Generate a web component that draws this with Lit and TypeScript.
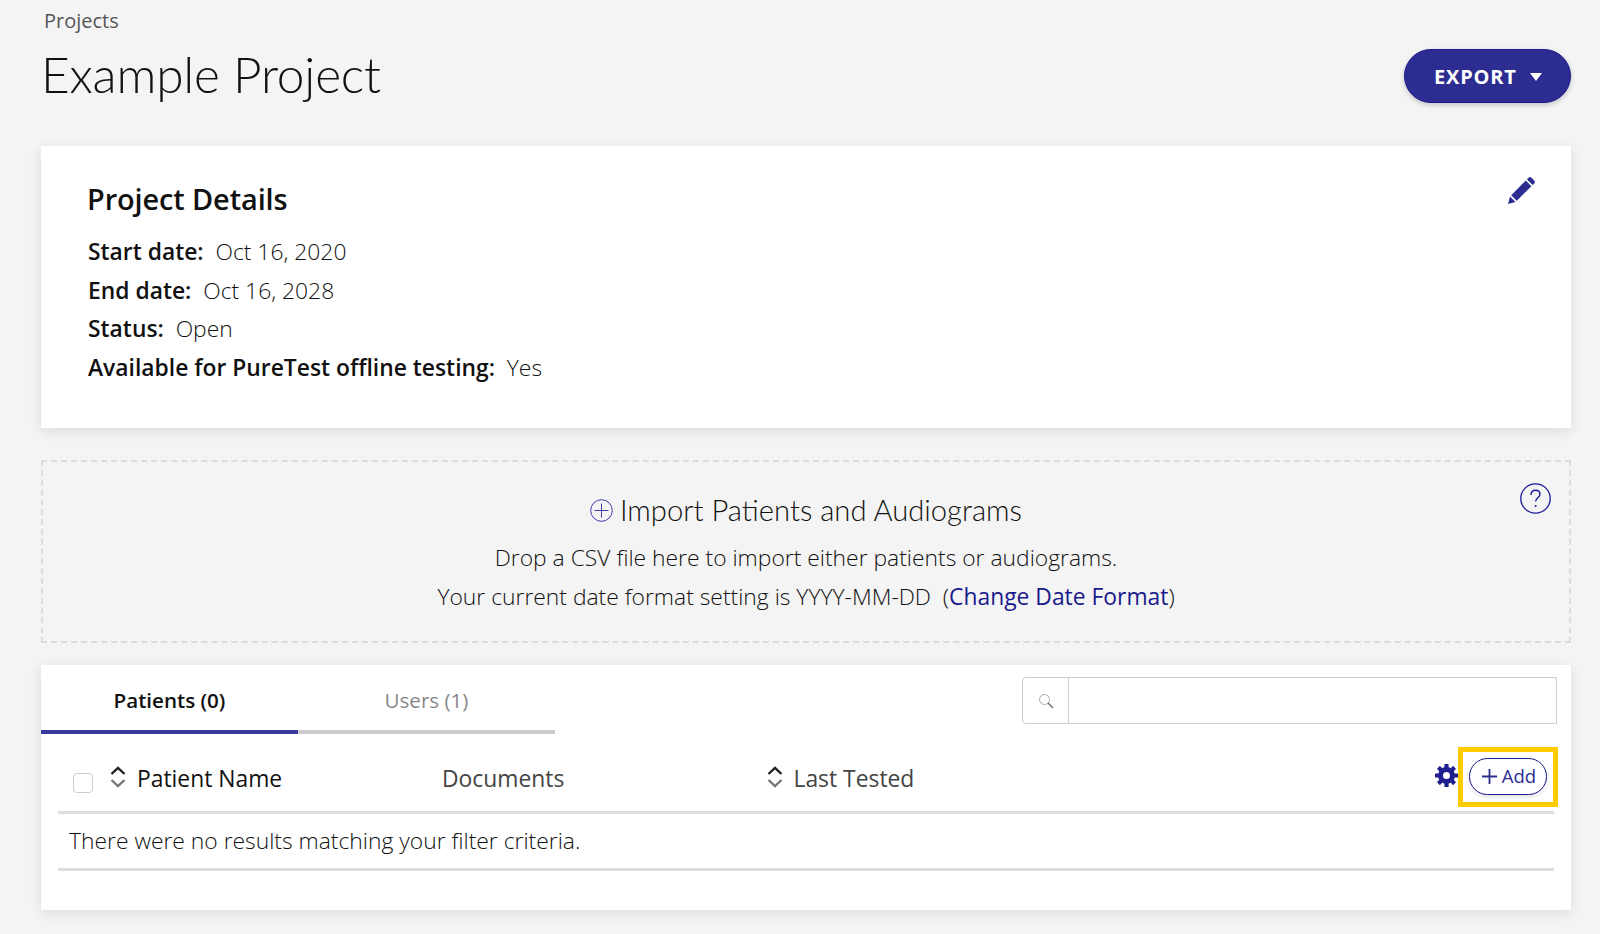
import { LitElement, html, css, svg } from "lit";
import { customElement } from "lit/decorators.js";

const sortIcon = html`<svg class="sort" viewBox="0 0 16 22" width="16" height="22" fill="none" stroke-width="2.4">
  <path d="M1.5 8 8 1.8 14.5 8" stroke="#222"/>
  <path d="M1.5 14 8 20.2 14.5 14" stroke="#777"/>
</svg>`;

const teeth = [0, 45, 90, 135, 180, 225, 270, 315].map(
  (a) => svg`<rect x="9.4" y="0" width="4.2" height="5" rx=".6" transform="rotate(${a} 11.5 11.5)"/>`
);

@customElement("app-root")
export class AppRoot extends LitElement {
  static styles = css`
    :host {
      display: block;
      width: 1600px;
      height: 934px;
      overflow: hidden;
      background: #f4f4f4;
      font-family: "Open Sans", sans-serif;
      color: #111;
    }
    .page { padding: 0 29px 0 41px; }
    .head { display: flex; justify-content: space-between; align-items: flex-start; height: 146px; }
    .crumb { font-size: 20px; line-height: 27px; padding: 7px 0 0 3px; color: #555; }
    h1 {
      margin: 10px 0 0;
      font: 300 49.6px/60px Lato, sans-serif;
      color: #111;
      letter-spacing: -0.2px;
    }
    .export {
      margin-top: 49px;
      width: 167px;
      height: 54px;
      box-sizing: border-box;
      border: 1px solid #1a1a8c;
      border-radius: 27px;
      background: #2c2c91;
      color: #fff;
      font: 700 20px/1 "Open Sans", sans-serif;
      letter-spacing: 0.8px;
      display: flex;
      align-items: center;
      padding: 2px 0 0 29px;
      gap: 13px;
      box-shadow: 0 2px 5px rgba(0,0,0,.2);
    }
    .caret { width: 0; height: 0; border: 6.5px solid transparent; border-top: 8px solid #fff; border-bottom: 0; }
    .card { background: #fff; box-shadow: 0 3px 12px rgba(0,0,0,.1); }
    .details { position: relative; height: 282px; box-sizing: border-box; padding: 34px 47px 0; }
    .edit { position: absolute; top: 31px; right: 36px; }
    h2 { margin: 0 0 15px; font: 600 28.9px/38px "Open Sans", sans-serif; letter-spacing: -0.1px; margin-left: -1px; }
    .row { font-size: 22.85px; line-height: 38.7px; font-weight: 300; white-space: pre; }
    .row b { font-weight: 600; }
    .drop {
      position: relative;
      margin-top: 32px;
      height: 183px;
      box-sizing: border-box;
      border: 2px dashed #dcdcdc;
      text-align: center;
      padding-top: 29px;
      font-size: 22.85px;
      font-weight: 300;
      line-height: 39px;
    }
    .help { position: absolute; top: 21px; right: 18px; }
    .drop h3 {
      margin: 0 0 8.5px;
      font: 300 29.2px/38px Lato, sans-serif;
      display: flex;
      justify-content: center;
      align-items: center;
      gap: 7px;
    }
    .drop .fmt { white-space: pre; }
    .drop a { color: #1a1a8c; font-weight: 400; text-decoration: none; }
    .table { margin-top: 22px; height: 245px; }
    .top { display: flex; justify-content: space-between; height: 69px; }
    .tabs { display: flex; }
    .tab {
      width: 257px;
      height: 69px;
      box-sizing: border-box;
      border-bottom: 4px solid #ccc;
      font-size: 20.6px;
      line-height: 27px;
      padding-top: 22px;
      text-align: center;
      color: #888;
    }
    .tab.on { border-bottom-color: #3a3a9e; color: #111; font-weight: 600; }
    .search {
      display: flex;
      width: 535px;
      height: 47px;
      box-sizing: border-box;
      margin: 12px 14px 0 0;
      border: 1.5px solid #ccc;
      border-radius: 4px 0 0 4px;
    }
    .mag { width: 45px; border-right: 1.5px solid #ccc; display: flex; align-items: center; justify-content: center; }
    .body { margin: 0 17px; }
    .cols {
      display: flex;
      align-items: center;
      height: 80px;
      box-sizing: border-box;
      border-bottom: 3px solid #ddd;
      font-size: 22.85px;
      padding: 12px 0 0 15px;
    }
    .check { width: 20px; height: 20px; box-sizing: border-box; border: 1.5px solid #ccc; border-radius: 4px; margin: 9px 17px 0 0; }
    .sort { flex: none; margin: -3px 11px 0 0; }
    .name { width: 305px; }
    .docs { width: 324.5px; color: #444; }
    .last { color: #444; flex: 1; }
    .gear { margin-right: 0; flex: none; margin-top: -7px; }
    .focus {
      box-sizing: border-box;
      width: 100px;
      height: 60px;
      border: 5px solid #ffcc00;
      display: flex;
      align-items: center;
      justify-content: center;
      margin: -4px -4px 0 0;
    }
    .add {
      width: 78px;
      height: 37px;
      box-sizing: border-box;
      border: 1.5px solid #1a1a8c;
      border-radius: 19px;
      background: #fff;
      color: #2c2c91;
      font: 400 18.5px/1 "Open Sans", sans-serif;
      display: flex;
      align-items: center;
      justify-content: center;
      gap: 5px;
      box-shadow: 0 2px 4px rgba(0,0,0,.12);
    }
    .add svg { margin-left: 2px; }
    .empty {
      height: 57px;
      box-sizing: border-box;
      border-bottom: 3px solid #ddd;
      font-size: 22.85px;
      font-weight: 300;
      line-height: 54px;
      padding-left: 11px;
    }
  `;

  render() {
    return html`<div class="page">
      <div class="head">
        <div>
          <div class="crumb">Projects</div>
          <h1>Example Project</h1>
        </div>
        <div class="export">EXPORT <span class="caret"></span></div>
      </div>

      <section class="card details">
        <svg class="edit" width="27" height="27" viewBox="0 0 27 27" fill="#2c2c91">
          <path d="M0 27 2 19.5 7.5 25z"/>
          <path d="M3.2 18.2 17.8 3.6 23.4 9.2 8.8 23.8z"/>
          <path d="M19 2.4 20.6.8a2 2 0 0 1 2.8 0l2.8 2.8a2 2 0 0 1 0 2.8L24.600 8z"/>
        </svg>
        <h2>Project Details</h2>
        <div class="row"><b>Start date:</b>  Oct 16, 2020</div>
        <div class="row"><b>End date:</b>  Oct 16, 2028</div>
        <div class="row"><b>Status:</b>  Open</div>
        <div class="row"><b>Available for PureTest offline testing:</b>  Yes</div>
      </section>

      <section class="drop">
        <svg class="help" width="31" height="31" viewBox="0 0 31 31" fill="none" stroke="#1a1a99">
          <circle cx="15.500" cy="15.500" r="14.700" stroke-width="1.300"/>
          <path d="M11 12c0-3 2-4.800 4.600-4.800s4.400 1.700 4.400 4.100c0 3.300-4.400 3.700-4.400 7.200" stroke-width="1.400"/>
          <circle cx="15.600" cy="23" r="1" fill="#1a1a99" stroke="none"/>
        </svg>
        <h3>
          <svg width="23" height="23" viewBox="0 0 23 23" fill="none" stroke="#3a3aa8" stroke-width="1">
            <circle cx="11.500" cy="11.500" r="10.800"/>
            <path d="M11.500 4.500v14M4.500 11.500h14"/>
          </svg>
          Import Patients and Audiograms
        </h3>
        <div>Drop a CSV file here to import either patients or audiograms.</div>
        <div class="fmt">Your current date format setting is YYYY-MM-DD  (<a href="#">Change Date Format</a>)</div>
      </section>

      <section class="card table">
        <div class="top">
          <div class="tabs">
            <div class="tab on">Patients (0)</div>
            <div class="tab">Users (1)</div>
          </div>
          <div class="search">
            <div class="mag">
              <svg width="16" height="16" viewBox="0 0 16 16" fill="none">
                <circle cx="6.500" cy="6.500" r="5" stroke="#aaa"/>
                <path d="M10 10l5 5" stroke="#666" stroke-width="1.200"/>
              </svg>
            </div>
          </div>
        </div>
        <div class="body">
          <div class="cols">
            <span class="check"></span>
            ${sortIcon}
            <span class="name">Patient Name</span>
            <span class="docs">Documents</span>
            ${sortIcon}
            <span class="last">Last Tested</span>
            <svg class="gear" width="23" height="23" viewBox="0 0 23 23" fill="#1f1f8f">
              ${teeth}
              <path fill-rule="evenodd" d="M11.500 3a8.500 8.500 0 1 0 0 17 8.500 8.500 0 0 0 0-17zm0 5a3.500 3.500 0 1 1 0 7 3.500 3.500 0 0 1 0-7z"/>
            </svg>
            <div class="focus"><div class="add">
              <svg width="15" height="15" viewBox="0 0 15 15" stroke="#2c2c91" stroke-width="1.800"><path d="M7.500 0v15M0 7.500h15"/></svg>
              Add
            </div></div>
          </div>
          <div class="empty">There were no results matching your filter criteria.</div>
        </div>
      </section>
    </div>`;
  }
}
